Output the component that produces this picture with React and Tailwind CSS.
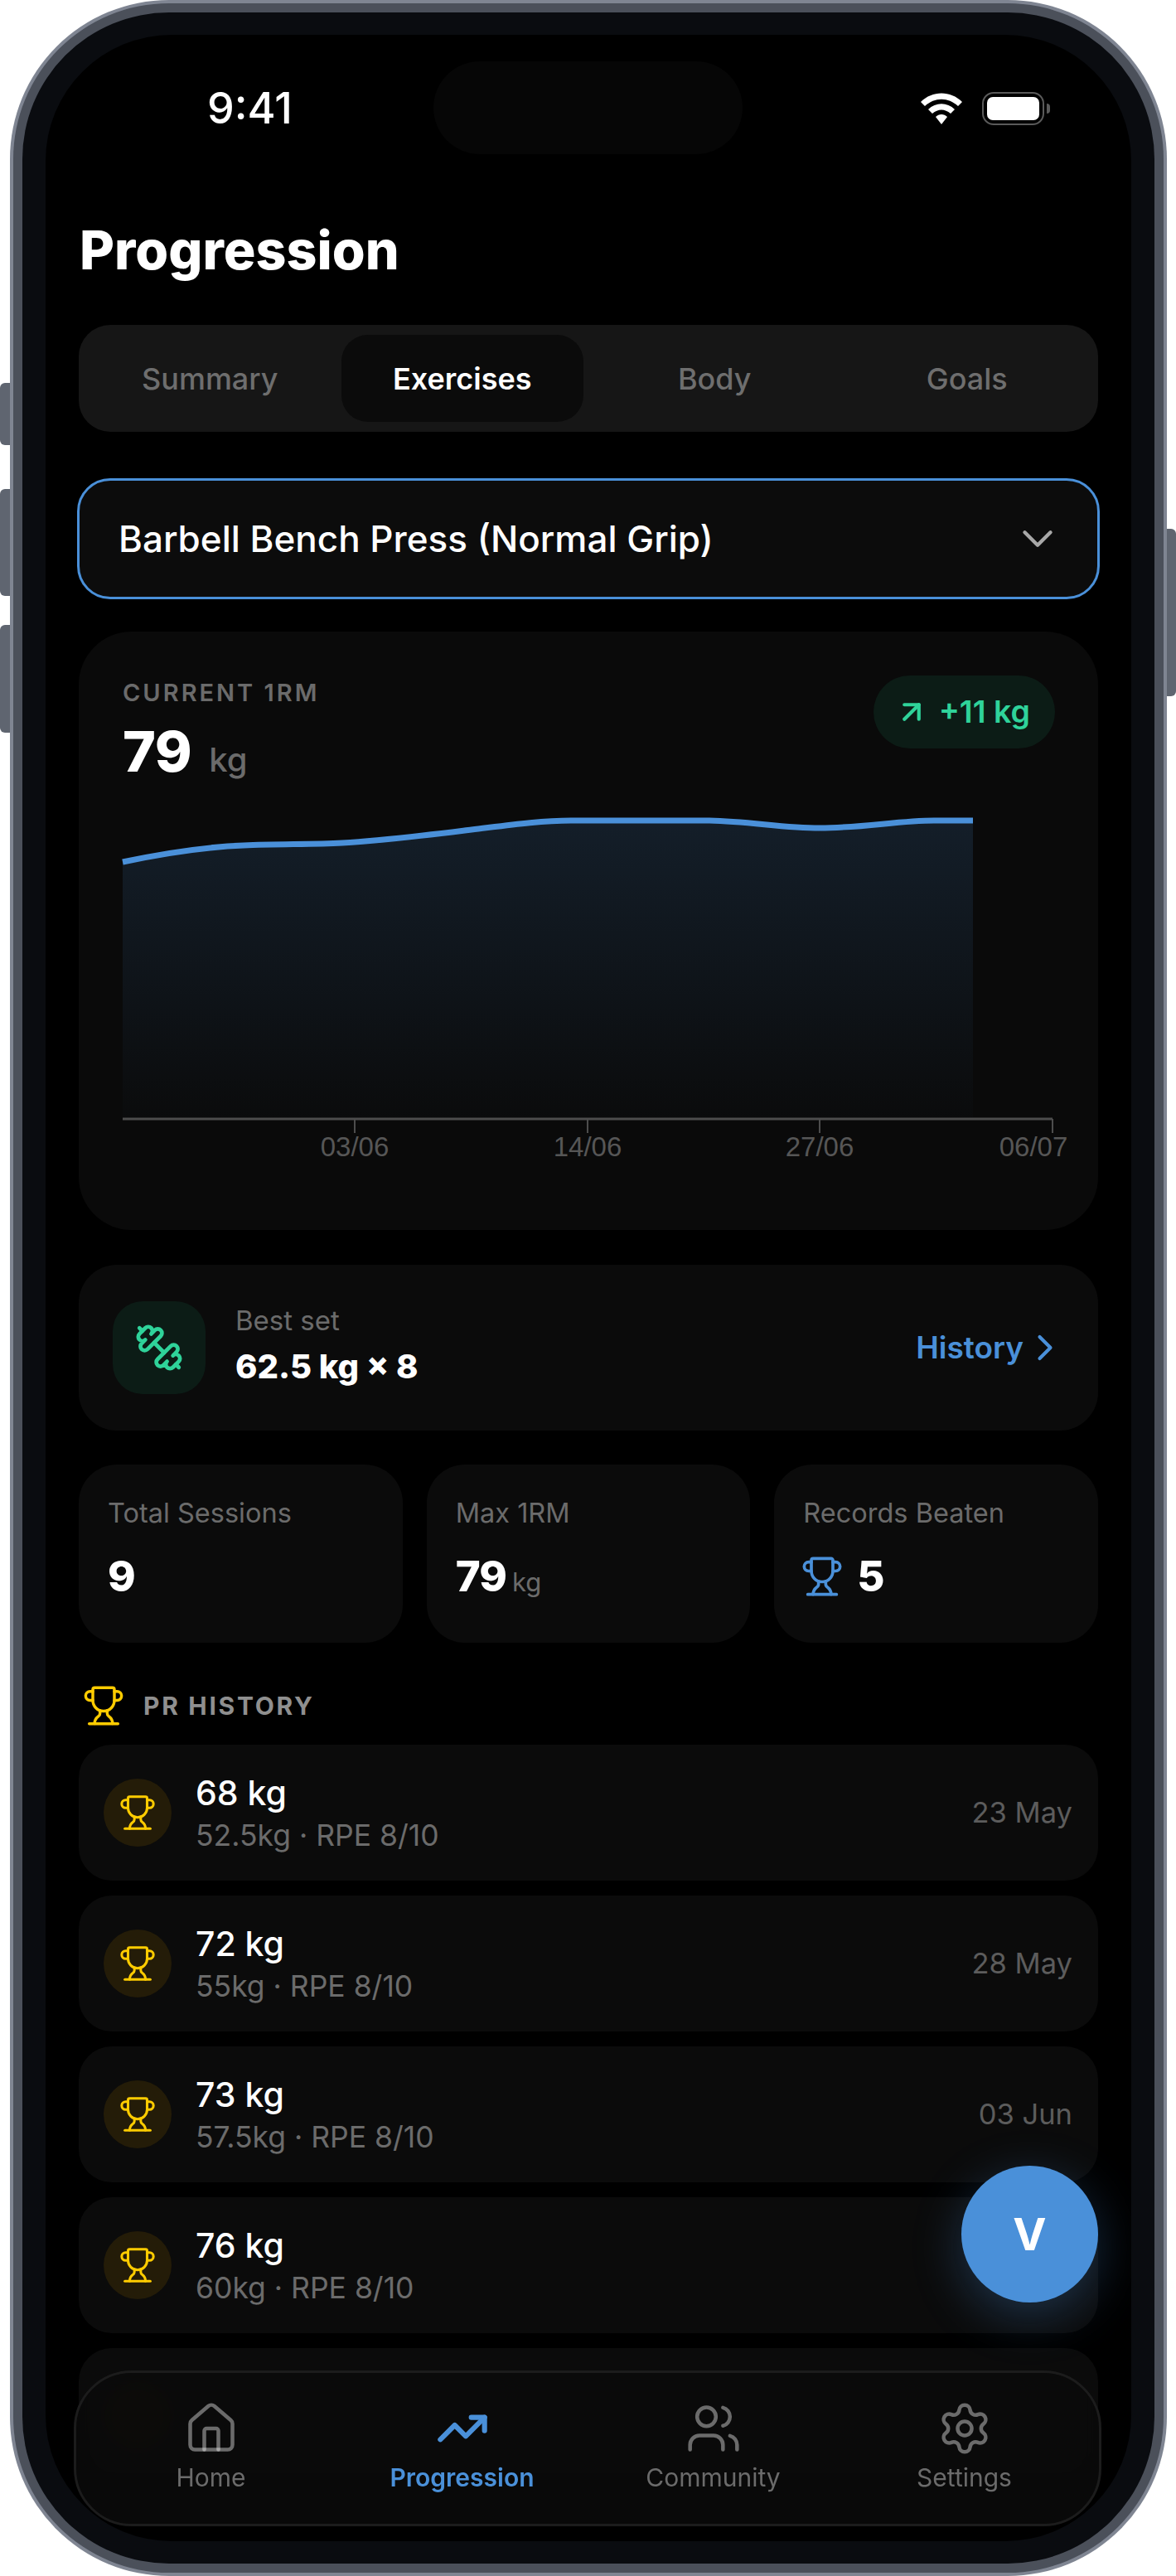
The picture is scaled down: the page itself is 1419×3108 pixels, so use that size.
import React from "react";
import {
  ArrowUpRight,
  ChevronDown,
  ChevronRight,
  Dumbbell,
  House,
  Settings,
  TrendingUp,
  Trophy,
  Users,
} from "lucide-react";

const tabs = ["Summary", "Exercises", "Body", "Goals"];

const records = [
  { value: "68 kg", sub: "52.5kg · RPE 8/10", date: "23 May" },
  { value: "72 kg", sub: "55kg · RPE 8/10", date: "28 May" },
  { value: "73 kg", sub: "57.5kg · RPE 8/10", date: "03 Jun" },
  { value: "76 kg", sub: "60kg · RPE 8/10", date: "" },
];

const navItems = [
  { label: "Home", icon: House, size: 68 },
  { label: "Progression", icon: TrendingUp, size: 64, active: true },
  { label: "Community", icon: Users, size: 68 },
  { label: "Settings", icon: Settings, size: 68 },
];

const linePath =
  "M148 1040 C195 1030 245 1022 294 1020 C335 1018 375 1019 413 1017 C465 1014 520 1007 569 1001 C610 996 650 990 689 990 C745 990 800 990 856 990 C905 991 945 999 989 999 C1040 999 1085 990 1127 990 C1145 990 1160 990 1174 990";

function Chart() {
  return (
    <svg viewBox="148 980 1176 420" className="w-[1176px] h-[420px] mt-[38px] overflow-visible">
      <defs>
        <linearGradient id="area" x1="0" y1="0" x2="0" y2="1">
          <stop offset="0" stopColor="#4a90d9" stopOpacity="0.15" />
          <stop offset="1" stopColor="#4a90d9" stopOpacity="0.01" />
        </linearGradient>
      </defs>
      <path d={`${linePath} L1174 1350 L148 1350 Z`} fill="url(#area)" />
      <path d={linePath} fill="none" stroke="#4a90d9" strokeWidth="7" />
      <path d="M148 1350 H1270" stroke="#4d4d4d" strokeWidth="3" />
      <path d="M428 1350 V1367 M709 1350 V1367 M989 1350 V1367 M1270 1350 V1367" stroke="#4d4d4d" strokeWidth="2" />
      <g fill="#565656" fontSize="33" fontFamily="Liberation Sans, sans-serif" textAnchor="middle">
        <text x="428" y="1395">03/06</text>
        <text x="709" y="1395">14/06</text>
        <text x="989" y="1395">27/06</text>
        <text x="1247" y="1395">06/07</text>
      </g>
    </svg>
  );
}

function WifiIcon() {
  return (
    <svg viewBox="0 0 50 38" className="w-[50px] h-[38px]">
      <path d="M0 11 C14 -3 36 -3 50 11 L45 16 C33 5 17 5 5 16 Z" fill="#fff" />
      <path d="M9 20 C18 11 32 11 41 20 L36 25 C29 19 21 19 14 25 Z" fill="#fff" />
      <path d="M18 29 C22 25 28 25 32 29 L25 38 Z" fill="#fff" />
    </svg>
  );
}

function BatteryIcon() {
  return (
    <div className="flex items-center gap-[3px]">
      <div className="w-[75px] h-[40px] rounded-[14px] border-2 border-[#5a5a5a] p-[4px]">
        <div className="w-full h-full rounded-[7px] bg-white" />
      </div>
      <div className="w-[4px] h-[12px] rounded-r-[4px] bg-[#5a5a5a]" />
    </div>
  );
}

function RecordRow({ value, sub, date }) {
  return (
    <div className="flex items-center h-[164px] rounded-[40px] bg-[#0b0b0b] pl-[30px] pr-[31px]">
      <div className="flex items-center justify-center w-[82px] h-[82px] rounded-full bg-[#241c08]">
        <Trophy size={46} strokeWidth={1.6} className="text-[#ffcc00]" />
      </div>
      <div className="ml-[29px]">
        <div className="text-[41px] leading-[48px] font-medium text-white">{value}</div>
        <div className="text-[35.5px] leading-[40px] mt-[8px] text-[#6b6b6b]">{sub}</div>
      </div>
      <div className="ml-auto text-[34.5px] text-[#5c5c5c]">{date}</div>
    </div>
  );
}

function StatCard({ label, children }) {
  return (
    <div className="h-[215px] rounded-[46px] bg-[#0b0b0b] pl-[35px] pt-[40px]">
      <div className="text-[32.5px] leading-[38px] text-[#6b6b6b]">{label}</div>
      <div className="flex items-baseline mt-[27px] h-[60px]">{children}</div>
    </div>
  );
}

export default function App() {
  return (
    <div className="relative w-[1419px] h-[3108px] bg-white font-['Inter',sans-serif]">
      {/* side buttons */}
      <div className="absolute left-0 top-[462px] w-[14px] h-[75px] rounded-l-[6px] bg-[#5f6570]" />
      <div className="absolute left-0 top-[590px] w-[14px] h-[129px] rounded-l-[6px] bg-[#5f6570]" />
      <div className="absolute left-0 top-[754px] w-[14px] h-[130px] rounded-l-[6px] bg-[#5f6570]" />
      <div className="absolute right-0 top-[638px] w-[14px] h-[202px] rounded-r-[6px] bg-[#5f6570]" />

      {/* phone frame */}
      <div className="absolute left-[12px] top-0 w-[1396px] h-[3108px] rounded-[192px] bg-[#7f8592] p-[4px]">
        <div className="w-full h-full rounded-[188px] bg-[#4b505a] p-[11px]">
          <div className="w-full h-full rounded-[177px] bg-[#0a0c10] px-[28px] py-[27px]">
            <div className="relative w-full h-full rounded-[152px] bg-black overflow-hidden">
              {/* dynamic island */}
              <div className="absolute left-[468px] top-[32px] w-[373px] h-[112px] rounded-[56px] bg-[#060606]" />

              {/* status bar */}
              <div className="flex items-center justify-between h-[178px] pl-[195px] pr-[98px]">
                <span className="text-[52px] font-medium text-white">9:41</span>
                <div className="flex items-center gap-[24px]">
                  <WifiIcon />
                  <BatteryIcon />
                </div>
              </div>

              <div className="px-[40px]">
                <h1 className="mt-[46px] ml-[1px] h-[72px] text-[64.5px] leading-[72px] font-extrabold text-white">Progression</h1>

                {/* tabs */}
                <div className="grid grid-cols-4 gap-[12px] mt-[54px] h-[129px] rounded-[38px] bg-[#161616] p-[12px]">
                  {tabs.map((tab) => (
                    <div
                      key={tab}
                      className={
                        tab === "Exercises"
                          ? "flex items-center justify-center rounded-[32px] bg-[#0b0b0b] text-[36px] font-semibold text-white"
                          : "flex items-center justify-center rounded-[32px] text-[36px] font-medium text-[#6e6e6e]"
                      }
                    >
                      {tab}
                    </div>
                  ))}
                </div>

                {/* exercise select */}
                <div className="flex items-center justify-between mt-[56px] -mx-[2px] h-[146px] rounded-[40px] border-[3px] border-[#4a90d9] bg-[#0c0c0c] pl-[47px] pr-[41px]">
                  <span className="text-[44px] font-medium text-white">Barbell Bench Press (Normal Grip)</span>
                  <ChevronDown size={62} strokeWidth={1.7} className="text-[#a8a8a8]" />
                </div>

                {/* 1RM chart */}
                <div className="mt-[39px] h-[722px] rounded-[64px] bg-[#0a0a0a] pl-[53px] pt-[53px]">
                  <div className="flex items-start justify-between pr-[52px]">
                    <div className="pt-[3px]">
                      <div className="text-[29px] leading-[36px] font-semibold tracking-[3px] text-[#6b6b6b]">CURRENT 1RM</div>
                      <div className="flex items-baseline mt-[16px] h-[72px]">
                        <span className="text-[68px] leading-[72px] font-extrabold tracking-[-0.5px] text-white">79</span>
                        <span className="ml-[21px] text-[40px] font-medium text-[#6b6b6b]">kg</span>
                      </div>
                    </div>
                    <div className="flex items-center h-[88px] rounded-full bg-[#0c1c16] pl-[25px] pr-[30px] text-[#2fd39a]">
                      <ArrowUpRight size={42} strokeWidth={2.4} />
                      <span className="ml-[12px] text-[37.5px] font-semibold">+11 kg</span>
                    </div>
                  </div>
                  <Chart />
                </div>

                {/* best set */}
                <div className="flex items-center mt-[42px] h-[200px] rounded-[46px] bg-[#0b0b0b] pl-[41px] pr-[38px]">
                  <div className="flex items-center justify-center w-[112px] h-[112px] rounded-[36px] bg-[#0c1c16]">
                    <Dumbbell size={60} strokeWidth={1.9} className="-scale-x-100 text-[#2fd39a]" />
                  </div>
                  <div className="ml-[36px] mb-[6px]">
                    <div className="text-[33px] leading-[38px] text-[#6b6b6b]">Best set</div>
                    <div className="mt-[13px] text-[40px] leading-[48px] font-extrabold text-white">62.5 kg × 8</div>
                  </div>
                  <div className="flex items-center ml-auto text-[#4a90d9]">
                    <span className="text-[37px] font-semibold">History</span>
                    <ChevronRight size={52} strokeWidth={1.9} />
                  </div>
                </div>

                {/* stats */}
                <div className="grid grid-cols-3 gap-[29px] mt-[41px]">
                  <StatCard label="Total Sessions">
                    <span className="text-[51px] leading-[60px] font-extrabold text-white">9</span>
                  </StatCard>
                  <StatCard label="Max 1RM">
                    <span className="text-[51px] leading-[60px] font-extrabold tracking-[-1px] text-white">79</span>
                    <span className="ml-[7px] text-[31px] text-[#6b6b6b]">kg</span>
                  </StatCard>
                  <StatCard label="Records Beaten">
                    <Trophy size={52} strokeWidth={1.7} className="self-center -ml-[3px] text-[#4a90d9]" />
                    <span className="ml-[16px] text-[51px] leading-[60px] font-extrabold text-white">5</span>
                  </StatCard>
                </div>

                {/* PR history */}
                <div className="flex items-center mt-[54px] ml-[4px] h-[44px]">
                  <Trophy size={52} strokeWidth={1.6} className="text-[#ffcc00]" />
                  <span className="ml-[22px] text-[30px] font-bold tracking-[2.7px] text-[#8f8f8f]">PR HISTORY</span>
                </div>
                <div className="flex flex-col gap-[18px] mt-[25px]">
                  {records.map((r) => (
                    <RecordRow key={r.value} {...r} />
                  ))}
                  <div className="flex items-center h-[164px] rounded-[40px] bg-[#0b0b0b] pl-[30px]">
                    <div className="w-[82px] h-[82px] rounded-full bg-[#241c08]" />
                  </div>
                </div>
              </div>

              {/* floating button */}
              <div className="absolute left-[1105px] top-[2571px] flex items-center justify-center w-[165px] h-[165px] rounded-full bg-[#4a90d9] shadow-[0_16px_60px_rgba(74,144,217,0.3)] text-[54px] font-bold text-white">
                V
              </div>

              {/* bottom nav */}
              <div className="absolute left-[34px] right-[36px] top-[2818px] grid grid-cols-4 h-[188px] rounded-[70px] border-[3px] border-[#1c1c1c] bg-[#0a0a0a]/90 backdrop-blur-md px-[11px] pt-[33px]">
                {navItems.map(({ label, icon: Icon, size, active }) => (
                  <div key={label} className="flex flex-col items-center">
                    <div className="flex items-center justify-center h-[68px]">
                      <Icon
                        size={size}
                        strokeWidth={active ? 2.3 : 1.6}
                        className={active ? "text-[#4a90d9]" : "text-white/40"}
                      />
                    </div>
                    <span className={active ? "mt-[7px] text-[30px] leading-[36px] font-semibold text-[#4a90d9]" : "mt-[7px] text-[30px] leading-[36px] text-[#6b6b6b]"}>
                      {label}
                    </span>
                  </div>
                ))}
              </div>
            </div>
          </div>
        </div>
      </div>
    </div>
  );
}
